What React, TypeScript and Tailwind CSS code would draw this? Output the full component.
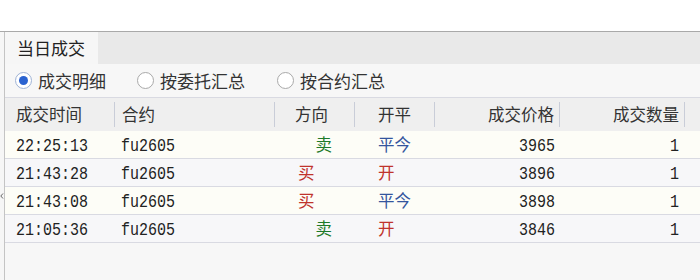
import React from "react";

const cjk = { fontFamily: '"Noto Sans CJK SC", "Noto Sans", sans-serif' };
const mono = { fontFamily: '"Liberation Mono", "DejaVu Sans Mono", monospace' };

type Row = { time: string; code: string; dir: "买" | "卖"; oc: "开" | "平今"; price: string; qty: string };

const rows: Row[] = [
  { time: "22:25:13", code: "fu2605", dir: "卖", oc: "平今", price: "3965", qty: "1" },
  { time: "21:43:28", code: "fu2605", dir: "买", oc: "开", price: "3896", qty: "1" },
  { time: "21:43:08", code: "fu2605", dir: "买", oc: "平今", price: "3898", qty: "1" },
  { time: "21:05:36", code: "fu2605", dir: "卖", oc: "开", price: "3846", qty: "1" },
];

const grid = "grid grid-cols-[110px_160px_80px_80px_125px_125px_1fr]";

function HeadCell({ children, align }: { children?: React.ReactNode; align: string }) {
  return (
    <div className="flex items-center h-full">
      <div className={`flex-1 h-[25px] border-r border-[#c9cdd8] flex items-center ${align}`}>{children}</div>
    </div>
  );
}

function Radio({ checked, label }: { checked?: boolean; label: string }) {
  return (
    <div className="flex items-center">
      {checked ? (
        <div className="w-[17px] h-[17px] rounded-full border border-[#9fb3d6] bg-white flex items-center justify-center">
          <div className="w-[9px] h-[9px] rounded-full bg-[#2a62d0]" />
        </div>
      ) : (
        <div className="w-[17px] h-[17px] rounded-full border border-[#a9a9a9] bg-white" />
      )}
      <span className="ml-[6px] text-[17px] text-[#333]" style={cjk}>
        {label}
      </span>
    </div>
  );
}

export default function App() {
  return (
    <div className="w-[700px] h-[280px] bg-white flex flex-col overflow-hidden">
      <div className="h-[31px] shrink-0" />
      <div className="flex-1 flex border-t border-[#a9a9a9]">
        <div className="w-[4px] shrink-0 bg-[#f6f6f6] flex flex-col">
          <div className="h-[161px]" />
          <svg width="4" height="6" viewBox="0 0 4 6">
            <path d="M3 0.5 L0.8 3 L3 5.5" stroke="#666" strokeWidth="1" fill="none" />
          </svg>
        </div>
        <div className="flex-1 flex flex-col border-l border-[#c4c4c4] bg-[#f7f7f7]">
          <div className="h-[32px] bg-[#e9e9e9] flex shrink-0">
            <div className="w-[93px] bg-[#f6f6f6] flex items-center pl-[12px] text-[17px] text-[#222]" style={cjk}>
              当日成交
            </div>
          </div>
          <div className="h-[33px] flex items-center shrink-0 pl-[10px]">
            <div className="w-[122px]">
              <Radio checked label="成交明细" />
            </div>
            <div className="w-[140px]">
              <Radio label="按委托汇总" />
            </div>
            <Radio label="按合约汇总" />
          </div>
          <div className={`${grid} h-[34px] border-t border-[#d9dae2] bg-[#efefef] text-[16.5px] text-[#333] shrink-0`} style={cjk}>
            <HeadCell align="pl-[11px]">成交时间</HeadCell>
            <HeadCell align="pl-[7px]">合约</HeadCell>
            <HeadCell align="justify-center pr-[6px]">方向</HeadCell>
            <HeadCell align="justify-center">开平</HeadCell>
            <HeadCell align="justify-end pr-[5px]">成交价格</HeadCell>
            <HeadCell align="justify-end pr-[5px]">成交数量</HeadCell>
            <div />
          </div>
          {rows.map((r, i) => (
            <div
              key={i}
              className={`${grid} h-[28px] border-b border-[#d9dae2] text-[15px] text-[#222] items-center shrink-0 ${
                i % 2 === 0 ? "bg-[#fdfdf7]" : "bg-[#f7f7f9]"
              }`}
            >
              <div className="pl-[11px] pt-[5px] scale-y-[1.18]" style={mono}>
                {r.time}
              </div>
              <div className="pl-[6px] pt-[5px] scale-y-[1.18]" style={mono}>
                {r.code}
              </div>
              <div
                className={`text-[16.5px] ${r.dir === "买" ? "pl-[23px] text-[#c0332c]" : "text-right pr-[23px] text-[#1e7a2a]"}`}
                style={cjk}
              >
                {r.dir}
              </div>
              <div className={`pl-[23px] text-[16.5px] ${r.oc === "开" ? "text-[#c0332c]" : "text-[#34559e]"}`} style={cjk}>
                {r.oc}
              </div>
              <div className="text-right pr-[5px] pt-[5px] scale-y-[1.18]" style={mono}>
                {r.price}
              </div>
              <div className="text-right pr-[6px] pt-[5px] scale-y-[1.18]" style={mono}>
                {r.qty}
              </div>
              <div />
            </div>
          ))}
        </div>
      </div>
    </div>
  );
}
